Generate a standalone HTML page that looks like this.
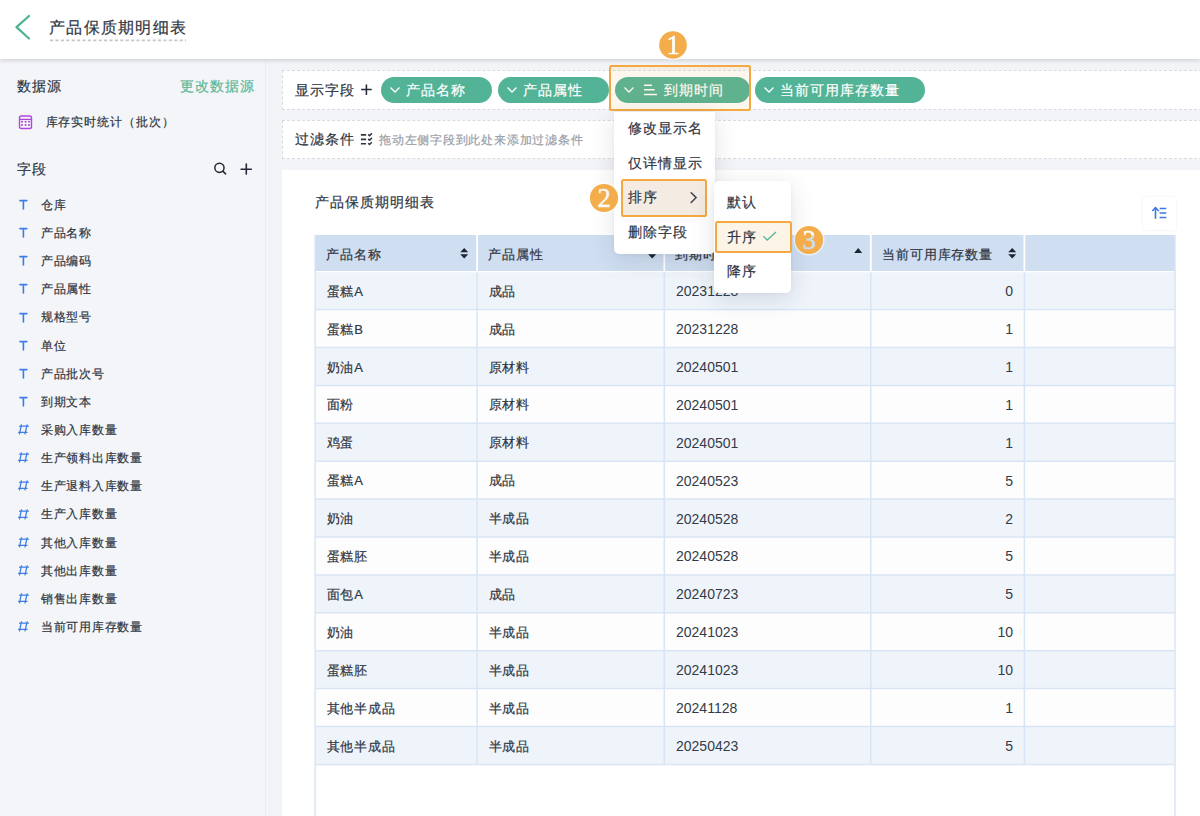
<!DOCTYPE html>
<html><head><meta charset="utf-8">
<style>
*{box-sizing:border-box;margin:0;padding:0}
html,body{width:1200px;height:816px;overflow:hidden}
body{position:relative;background:#f3f4f7;font-family:"Liberation Sans",sans-serif;color:#2f3542;-webkit-text-stroke:0.2px currentColor}
.a{position:absolute;white-space:nowrap}
#hdr{position:absolute;left:0;top:0;width:1200px;height:59px;background:#fff;box-shadow:0 2px 4px rgba(0,0,0,.13);z-index:5}
#side{position:absolute;left:0;top:0;width:266px;height:816px;background:#f4f5f8;border-right:1px solid #ebecef}
.t13{font-size:12px;line-height:13px;letter-spacing:0.74px}
.t14{font-size:13px;line-height:14px;letter-spacing:0.9px}
.t15{font-size:14px;line-height:15px;letter-spacing:1px}
.t14d{font-size:14px;line-height:14px}
.dg{-webkit-text-stroke:0;color:#343b48}
.sc{transform:scale(0.975);transform-origin:0 50%}
.sh{transform:scale(0.985);transform-origin:0 50%}
.box{position:absolute;left:282px;width:940px;background:#fff;border:1px dashed #d8dbdf}
.pill{position:absolute;top:77px;height:26px;border-radius:13px;background:#52b396;color:#fff}
.pill .tx{position:absolute;top:5.6px;font-size:14px;line-height:15px;letter-spacing:1px}
.pill svg{position:absolute}
.card{position:absolute;left:282px;top:170px;width:940px;height:660px;background:#fff}
.menu{position:absolute;background:#fff;border-radius:5px;box-shadow:0 6px 24px rgba(30,40,60,.13),0 1px 4px rgba(30,40,60,.05)}
.badge{position:absolute;width:27.5px;height:27.5px;border-radius:50%;background:#f3ad4b;color:#fff;font-family:"Liberation Serif",serif;font-size:26px;line-height:28px;text-align:center;font-weight:bold}
.hl{position:absolute;border:2px solid #f3a842;border-radius:2.5px}
</style></head><body>
<div id="side">
  <div class="a t15" style="left:17px;top:78.5px">数据源</div>
  <div class="a t15" style="left:179.7px;top:78.5px;color:#5cb899">更改数据源</div>
  <svg class="a" style="left:18px;top:114px" width="16" height="16"><rect x="1.5" y="2" width="12" height="12.5" rx="1.8" fill="none" stroke="#b046d9" stroke-width="1.4"/><path d="M1.5 5.4H13.5" stroke="#b046d9" stroke-width="1.3"/><g fill="#b046d9"><circle cx="4" cy="7.8" r="1.05"/><circle cx="7.6" cy="7.8" r="1.05"/><circle cx="11" cy="7.8" r="1.05"/><circle cx="4" cy="11" r="1.05"/><circle cx="7.6" cy="11" r="1.05"/><circle cx="11" cy="11" r="1.05"/></g></svg>
  <div class="a t13" style="left:45.5px;top:116.3px;letter-spacing:0.98px">库存实时统计（批次）</div>
  <div class="a t15" style="left:17px;top:162px">字段</div>
  <svg class="a" style="left:212px;top:160px" width="16" height="16"><circle cx="7.45" cy="7.8" r="4.6" fill="none" stroke="#232937" stroke-width="1.5"/><path d="M10.8 11.2L13.6 13.8" stroke="#232937" stroke-width="1.6" stroke-linecap="round"/></svg>
  <svg class="a" style="left:238px;top:161px" width="16" height="15"><path d="M8.3 3V13.1M3.1 8.3H13.3" stroke="#232937" stroke-width="1.6" stroke-linecap="round"/></svg>
<svg class="a" style="left:18px;top:198.90px" width="11" height="12"><path d="M1.9 1.6H8.9M5.4 1.6V9.9" stroke="#3f7de6" stroke-width="1.6" stroke-linecap="round" fill="none"/></svg>
<div class="a" style="left:41px;top:198.80px;font-size:12px;line-height:13px;letter-spacing:0.74px">仓库</div>
<svg class="a" style="left:18px;top:227.05px" width="11" height="12"><path d="M1.9 1.6H8.9M5.4 1.6V9.9" stroke="#3f7de6" stroke-width="1.6" stroke-linecap="round" fill="none"/></svg>
<div class="a" style="left:41px;top:226.95px;font-size:12px;line-height:13px;letter-spacing:0.74px">产品名称</div>
<svg class="a" style="left:18px;top:255.20px" width="11" height="12"><path d="M1.9 1.6H8.9M5.4 1.6V9.9" stroke="#3f7de6" stroke-width="1.6" stroke-linecap="round" fill="none"/></svg>
<div class="a" style="left:41px;top:255.10px;font-size:12px;line-height:13px;letter-spacing:0.74px">产品编码</div>
<svg class="a" style="left:18px;top:283.35px" width="11" height="12"><path d="M1.9 1.6H8.9M5.4 1.6V9.9" stroke="#3f7de6" stroke-width="1.6" stroke-linecap="round" fill="none"/></svg>
<div class="a" style="left:41px;top:283.25px;font-size:12px;line-height:13px;letter-spacing:0.74px">产品属性</div>
<svg class="a" style="left:18px;top:311.50px" width="11" height="12"><path d="M1.9 1.6H8.9M5.4 1.6V9.9" stroke="#3f7de6" stroke-width="1.6" stroke-linecap="round" fill="none"/></svg>
<div class="a" style="left:41px;top:311.40px;font-size:12px;line-height:13px;letter-spacing:0.74px">规格型号</div>
<svg class="a" style="left:18px;top:339.65px" width="11" height="12"><path d="M1.9 1.6H8.9M5.4 1.6V9.9" stroke="#3f7de6" stroke-width="1.6" stroke-linecap="round" fill="none"/></svg>
<div class="a" style="left:41px;top:339.55px;font-size:12px;line-height:13px;letter-spacing:0.74px">单位</div>
<svg class="a" style="left:18px;top:367.80px" width="11" height="12"><path d="M1.9 1.6H8.9M5.4 1.6V9.9" stroke="#3f7de6" stroke-width="1.6" stroke-linecap="round" fill="none"/></svg>
<div class="a" style="left:41px;top:367.70px;font-size:12px;line-height:13px;letter-spacing:0.74px">产品批次号</div>
<svg class="a" style="left:18px;top:395.95px" width="11" height="12"><path d="M1.9 1.6H8.9M5.4 1.6V9.9" stroke="#3f7de6" stroke-width="1.6" stroke-linecap="round" fill="none"/></svg>
<div class="a" style="left:41px;top:395.85px;font-size:12px;line-height:13px;letter-spacing:0.74px">到期文本</div>
<svg class="a" style="left:17px;top:424.10px" width="13" height="12"><path d="M4.4 0.9L2.5 9.9M10.1 0.9L8 9.9M2.6 2.2H11.4M1.6 8.3H10.1" stroke="#3f7de6" stroke-width="1.3" stroke-linecap="round" fill="none"/></svg>
<div class="a" style="left:41px;top:424.00px;font-size:12px;line-height:13px;letter-spacing:0.74px">采购入库数量</div>
<svg class="a" style="left:17px;top:452.25px" width="13" height="12"><path d="M4.4 0.9L2.5 9.9M10.1 0.9L8 9.9M2.6 2.2H11.4M1.6 8.3H10.1" stroke="#3f7de6" stroke-width="1.3" stroke-linecap="round" fill="none"/></svg>
<div class="a" style="left:41px;top:452.15px;font-size:12px;line-height:13px;letter-spacing:0.74px">生产领料出库数量</div>
<svg class="a" style="left:17px;top:480.40px" width="13" height="12"><path d="M4.4 0.9L2.5 9.9M10.1 0.9L8 9.9M2.6 2.2H11.4M1.6 8.3H10.1" stroke="#3f7de6" stroke-width="1.3" stroke-linecap="round" fill="none"/></svg>
<div class="a" style="left:41px;top:480.30px;font-size:12px;line-height:13px;letter-spacing:0.74px">生产退料入库数量</div>
<svg class="a" style="left:17px;top:508.55px" width="13" height="12"><path d="M4.4 0.9L2.5 9.9M10.1 0.9L8 9.9M2.6 2.2H11.4M1.6 8.3H10.1" stroke="#3f7de6" stroke-width="1.3" stroke-linecap="round" fill="none"/></svg>
<div class="a" style="left:41px;top:508.45px;font-size:12px;line-height:13px;letter-spacing:0.74px">生产入库数量</div>
<svg class="a" style="left:17px;top:536.70px" width="13" height="12"><path d="M4.4 0.9L2.5 9.9M10.1 0.9L8 9.9M2.6 2.2H11.4M1.6 8.3H10.1" stroke="#3f7de6" stroke-width="1.3" stroke-linecap="round" fill="none"/></svg>
<div class="a" style="left:41px;top:536.60px;font-size:12px;line-height:13px;letter-spacing:0.74px">其他入库数量</div>
<svg class="a" style="left:17px;top:564.85px" width="13" height="12"><path d="M4.4 0.9L2.5 9.9M10.1 0.9L8 9.9M2.6 2.2H11.4M1.6 8.3H10.1" stroke="#3f7de6" stroke-width="1.3" stroke-linecap="round" fill="none"/></svg>
<div class="a" style="left:41px;top:564.75px;font-size:12px;line-height:13px;letter-spacing:0.74px">其他出库数量</div>
<svg class="a" style="left:17px;top:593.00px" width="13" height="12"><path d="M4.4 0.9L2.5 9.9M10.1 0.9L8 9.9M2.6 2.2H11.4M1.6 8.3H10.1" stroke="#3f7de6" stroke-width="1.3" stroke-linecap="round" fill="none"/></svg>
<div class="a" style="left:41px;top:592.90px;font-size:12px;line-height:13px;letter-spacing:0.74px">销售出库数量</div>
<svg class="a" style="left:17px;top:621.15px" width="13" height="12"><path d="M4.4 0.9L2.5 9.9M10.1 0.9L8 9.9M2.6 2.2H11.4M1.6 8.3H10.1" stroke="#3f7de6" stroke-width="1.3" stroke-linecap="round" fill="none"/></svg>
<div class="a" style="left:41px;top:621.05px;font-size:12px;line-height:13px;letter-spacing:0.74px">当前可用库存数量</div>
</div>
<div class="box" style="top:70px;height:40px">
</div>
<div class="a t15" style="left:295px;top:82.8px">显示字段</div>
<svg class="a" style="left:359px;top:82px" width="15" height="15"><path d="M7.4 2.5V12.9M2.1 7.5H12.7" stroke="#232937" stroke-width="1.55"/></svg>
<div class="pill" style="left:381px;width:111px"><svg style="left:8px;top:9px" width="12" height="8"><polyline points="1.5,1.5 6,6 10.5,1.5" fill="none" stroke="#fff" stroke-width="1.3"/></svg><div class="tx" style="left:25px">产品名称</div></div>
<div class="pill" style="left:498px;width:111px"><svg style="left:8px;top:9px" width="12" height="8"><polyline points="1.5,1.5 6,6 10.5,1.5" fill="none" stroke="#fff" stroke-width="1.3"/></svg><div class="tx" style="left:25px">产品属性</div></div>
<div class="pill" style="left:615px;width:135px"><svg style="left:8px;top:9px" width="12" height="8"><polyline points="1.5,1.5 6,6 10.5,1.5" fill="none" stroke="#fff" stroke-width="1.3"/></svg><svg style="left:29px;top:7px" width="15" height="12"><path d="M0 1.3H8M0 5.8H10.6M0 10.5H13" stroke="#fff" stroke-width="1.4"/></svg><div class="tx" style="left:49px">到期时间</div></div>
<div class="pill" style="left:755px;width:170px"><svg style="left:8px;top:9px" width="12" height="8"><polyline points="1.5,1.5 6,6 10.5,1.5" fill="none" stroke="#fff" stroke-width="1.3"/></svg><div class="tx" style="left:25.3px">当前可用库存数量</div></div>

<div class="box" style="top:120px;height:39px"></div>
<div class="a t15" style="left:295px;top:132.3px">过滤条件</div>
<svg class="a" style="left:359px;top:131px" width="16" height="16"><path d="M1.9 3.9H7.1M1.9 8.4H7.1M1.9 12.7H7.1" stroke="#2f3542" stroke-width="1.6"/><path d="M9.2 3.4L10.5 4.7L12.9 2.4M9.2 7.9L10.5 9.2L12.9 6.9M9.2 12.2L10.5 13.5L12.9 11.2" fill="none" stroke="#2f3542" stroke-width="1.5" stroke-linejoin="round"/></svg>
<div class="a t13" style="left:379px;top:133.5px;color:#9a9ea6;letter-spacing:0.78px">拖动左侧字段到此处来添加过滤条件</div>

<div class="card">
</div>
<div class="a t15" style="left:315px;top:195px">产品保质期明细表</div>
<div class="a" style="left:1143px;top:197px;width:33px;height:33px;background:#fff;border-radius:3px;box-shadow:0 0 3px rgba(0,0,0,.08)"></div>
<svg class="a" style="left:1150px;top:205px" width="18" height="16"><path d="M5.5 2.6V13.8" stroke="#3a78e6" stroke-width="1.6"/><path d="M2.3 6L5.5 2.6L8.7 6" fill="none" stroke="#3a78e6" stroke-width="1.6"/><path d="M9.6 3.5H16.3M9.6 8H16.3M9.6 12.6H16.3" stroke="#3a78e6" stroke-width="1.5"/></svg>

<!-- table -->
<div class="a" style="left:315px;top:235px;width:860px;height:36.60000000000002px;background:#cfdff1"></div>
<div class="a" style="left:315px;top:271.60px;width:860px;height:38.00px;background:#eff4fb"></div>
<div class="a t14" style="left:326.5px;top:284.70px">蛋糕A</div>
<div class="a t14" style="left:488.5px;top:284.70px">成品</div>
<div class="a t14d dg" style="left:676px;top:284.10px">20231228</div>
<div class="a t14d dg" style="right:187px;top:284.10px">0</div>
<div class="a" style="left:315px;top:309.60px;width:860px;height:37.90px;background:#fdfdfe"></div>
<div class="a t14" style="left:326.5px;top:322.65px">蛋糕B</div>
<div class="a t14" style="left:488.5px;top:322.65px">成品</div>
<div class="a t14d dg" style="left:676px;top:322.05px">20231228</div>
<div class="a t14d dg" style="right:187px;top:322.05px">1</div>
<div class="a" style="left:315px;top:347.50px;width:860px;height:37.90px;background:#eff4fb"></div>
<div class="a t14" style="left:326.5px;top:360.55px">奶油A</div>
<div class="a t14" style="left:488.5px;top:360.55px">原材料</div>
<div class="a t14d dg" style="left:676px;top:359.95px">20240501</div>
<div class="a t14d dg" style="right:187px;top:359.95px">1</div>
<div class="a" style="left:315px;top:385.40px;width:860px;height:37.90px;background:#fdfdfe"></div>
<div class="a t14" style="left:326.5px;top:398.45px">面粉</div>
<div class="a t14" style="left:488.5px;top:398.45px">原材料</div>
<div class="a t14d dg" style="left:676px;top:397.85px">20240501</div>
<div class="a t14d dg" style="right:187px;top:397.85px">1</div>
<div class="a" style="left:315px;top:423.30px;width:860px;height:37.90px;background:#eff4fb"></div>
<div class="a t14" style="left:326.5px;top:436.35px">鸡蛋</div>
<div class="a t14" style="left:488.5px;top:436.35px">原材料</div>
<div class="a t14d dg" style="left:676px;top:435.75px">20240501</div>
<div class="a t14d dg" style="right:187px;top:435.75px">1</div>
<div class="a" style="left:315px;top:461.20px;width:860px;height:37.90px;background:#fdfdfe"></div>
<div class="a t14" style="left:326.5px;top:474.25px">蛋糕A</div>
<div class="a t14" style="left:488.5px;top:474.25px">成品</div>
<div class="a t14d dg" style="left:676px;top:473.65px">20240523</div>
<div class="a t14d dg" style="right:187px;top:473.65px">5</div>
<div class="a" style="left:315px;top:499.10px;width:860px;height:37.90px;background:#eff4fb"></div>
<div class="a t14" style="left:326.5px;top:512.15px">奶油</div>
<div class="a t14" style="left:488.5px;top:512.15px">半成品</div>
<div class="a t14d dg" style="left:676px;top:511.55px">20240528</div>
<div class="a t14d dg" style="right:187px;top:511.55px">2</div>
<div class="a" style="left:315px;top:537.00px;width:860px;height:37.90px;background:#fdfdfe"></div>
<div class="a t14" style="left:326.5px;top:550.05px">蛋糕胚</div>
<div class="a t14" style="left:488.5px;top:550.05px">半成品</div>
<div class="a t14d dg" style="left:676px;top:549.45px">20240528</div>
<div class="a t14d dg" style="right:187px;top:549.45px">5</div>
<div class="a" style="left:315px;top:574.90px;width:860px;height:37.90px;background:#eff4fb"></div>
<div class="a t14" style="left:326.5px;top:587.95px">面包A</div>
<div class="a t14" style="left:488.5px;top:587.95px">成品</div>
<div class="a t14d dg" style="left:676px;top:587.35px">20240723</div>
<div class="a t14d dg" style="right:187px;top:587.35px">5</div>
<div class="a" style="left:315px;top:612.80px;width:860px;height:37.90px;background:#fdfdfe"></div>
<div class="a t14" style="left:326.5px;top:625.85px">奶油</div>
<div class="a t14" style="left:488.5px;top:625.85px">半成品</div>
<div class="a t14d dg" style="left:676px;top:625.25px">20241023</div>
<div class="a t14d dg" style="right:187px;top:625.25px">10</div>
<div class="a" style="left:315px;top:650.70px;width:860px;height:37.90px;background:#eff4fb"></div>
<div class="a t14" style="left:326.5px;top:663.75px">蛋糕胚</div>
<div class="a t14" style="left:488.5px;top:663.75px">半成品</div>
<div class="a t14d dg" style="left:676px;top:663.15px">20241023</div>
<div class="a t14d dg" style="right:187px;top:663.15px">10</div>
<div class="a" style="left:315px;top:688.60px;width:860px;height:37.90px;background:#fdfdfe"></div>
<div class="a t14" style="left:326.5px;top:701.65px">其他半成品</div>
<div class="a t14" style="left:488.5px;top:701.65px">半成品</div>
<div class="a t14d dg" style="left:676px;top:701.05px">20241128</div>
<div class="a t14d dg" style="right:187px;top:701.05px">1</div>
<div class="a" style="left:315px;top:726.50px;width:860px;height:37.90px;background:#eff4fb"></div>
<div class="a t14" style="left:326.5px;top:739.55px">其他半成品</div>
<div class="a t14" style="left:488.5px;top:739.55px">半成品</div>
<div class="a t14d dg" style="left:676px;top:738.95px">20250423</div>
<div class="a t14d dg" style="right:187px;top:738.95px">5</div>
<svg class="a" style="left:0;top:0" width="1200" height="816"><line x1="315" y1="309.60" x2="1175" y2="309.60" stroke="#d9e5f4" stroke-width="1.5"/><line x1="315" y1="347.50" x2="1175" y2="347.50" stroke="#d9e5f4" stroke-width="1.5"/><line x1="315" y1="385.40" x2="1175" y2="385.40" stroke="#d9e5f4" stroke-width="1.5"/><line x1="315" y1="423.30" x2="1175" y2="423.30" stroke="#d9e5f4" stroke-width="1.5"/><line x1="315" y1="461.20" x2="1175" y2="461.20" stroke="#d9e5f4" stroke-width="1.5"/><line x1="315" y1="499.10" x2="1175" y2="499.10" stroke="#d9e5f4" stroke-width="1.5"/><line x1="315" y1="537.00" x2="1175" y2="537.00" stroke="#d9e5f4" stroke-width="1.5"/><line x1="315" y1="574.90" x2="1175" y2="574.90" stroke="#d9e5f4" stroke-width="1.5"/><line x1="315" y1="612.80" x2="1175" y2="612.80" stroke="#d9e5f4" stroke-width="1.5"/><line x1="315" y1="650.70" x2="1175" y2="650.70" stroke="#d9e5f4" stroke-width="1.5"/><line x1="315" y1="688.60" x2="1175" y2="688.60" stroke="#d9e5f4" stroke-width="1.5"/><line x1="315" y1="726.50" x2="1175" y2="726.50" stroke="#d9e5f4" stroke-width="1.5"/><line x1="315" y1="764.40" x2="1175" y2="764.40" stroke="#d9e5f4" stroke-width="1.5"/><line x1="477.1" y1="271.6" x2="477.1" y2="764.40" stroke="#d9e5f4" stroke-width="1.5"/><line x1="477.1" y1="235" x2="477.1" y2="271.6" stroke="#ffffff" stroke-width="1.8"/><line x1="664.3" y1="271.6" x2="664.3" y2="764.40" stroke="#d9e5f4" stroke-width="1.5"/><line x1="664.3" y1="235" x2="664.3" y2="271.6" stroke="#ffffff" stroke-width="1.8"/><line x1="870.8" y1="271.6" x2="870.8" y2="764.40" stroke="#d9e5f4" stroke-width="1.5"/><line x1="870.8" y1="235" x2="870.8" y2="271.6" stroke="#ffffff" stroke-width="1.8"/><line x1="1024.4" y1="271.6" x2="1024.4" y2="764.40" stroke="#d9e5f4" stroke-width="1.5"/><line x1="1024.4" y1="235" x2="1024.4" y2="271.6" stroke="#ffffff" stroke-width="1.8"/><line x1="315.1" y1="235" x2="315.1" y2="816" stroke="#d9e5f4" stroke-width="1.5"/><line x1="1175" y1="235" x2="1175" y2="816" stroke="#d9e5f4" stroke-width="1.5"/><line x1="316" y1="271.6" x2="1174" y2="271.6" stroke="#ffffff" stroke-width="1.2"/></svg>
<div class="a t14"  style="left:326px;top:247.5px">产品名称</div>
<div class="a t14"  style="left:488px;top:247.5px">产品属性</div>
<div class="a t14"  style="left:675px;top:247.5px">到期时间</div>
<div class="a t14"  style="left:882px;top:247.5px">当前可用库存数量</div>
<svg class="a" style="left:459px;top:247px" width="11" height="13"><path d="M1.2 5.3L5.2 1L9.2 5.3ZM1.2 7.3L5.2 11.6L9.2 7.3Z" fill="#1d2433"/></svg>
<svg class="a" style="left:647px;top:247px" width="11" height="13"><path d="M1.2 5.3L5.2 1L9.2 5.3ZM1.2 7.3L5.2 11.6L9.2 7.3Z" fill="#1d2433"/></svg>
<svg class="a" style="left:853px;top:246px" width="11" height="8"><path d="M1.2 7L5.2 2L9.2 7Z" fill="#1d2433"/></svg>
<svg class="a" style="left:1007px;top:247px" width="11" height="13"><path d="M1.2 5.3L5.2 1L9.2 5.3ZM1.2 7.3L5.2 11.6L9.2 7.3Z" fill="#1d2433"/></svg>

<div id="hdr">
  <svg class="a" style="left:0;top:0" width="40" height="59"><polyline points="29,16 16.5,27.2 29,38.5" fill="none" stroke="#4fb394" stroke-width="2.3" stroke-linecap="round" stroke-linejoin="round"/></svg>
  <div class="a" style="left:49px;top:19px;font-size:16px;line-height:17px;letter-spacing:1.25px;color:#2f3542">产品保质期明细表</div>
  <svg class="a" style="left:0;top:0" width="200" height="50"><line x1="50" y1="40.3" x2="186" y2="40.3" stroke="#c5c8cd" stroke-width="1.7" stroke-dasharray="3.2 2.2"/></svg>
</div>

<div style="position:absolute;left:0;top:0;width:1200px;height:816px;z-index:9">
<!-- highlight 1 -->
<div class="hl" style="left:609.4px;top:65.4px;width:141.8px;height:46px;background:rgba(245,170,70,.09)"></div>
<svg class="a" style="left:653.2px;top:25.1px" width="40" height="40"><defs><mask id="mk1" maskUnits="userSpaceOnUse" x="0" y="0" width="40" height="40"><rect width="40" height="40" fill="#fff"/><text x="20" y="29" text-anchor="middle" font-family="Liberation Serif" font-size="26.5" fill="#000" stroke="#000" stroke-width="0.7">1</text></mask></defs><circle cx="20" cy="20" r="14.65" fill="none" stroke="rgba(255,255,255,.6)" stroke-width="1.4"/><circle cx="20" cy="20" r="13.85" fill="#f3ad4b" mask="url(#mk1)"/></svg>

<!-- menu -->
<div class="menu" style="left:614px;top:112px;width:101px;height:142px;border-radius:0 0 5px 5px">
</div>
<div class="a t15" style="left:627.5px;top:121px">修改显示名</div>
<div class="a t15" style="left:627.5px;top:156px">仅详情显示</div>
<div class="hl" style="left:621px;top:179.3px;width:86px;height:37.5px;background:#f4ece3"></div>
<div class="a t15" style="left:627.5px;top:190px">排序</div>
<svg class="a" style="left:688px;top:190px" width="11" height="15"><polyline points="2.7,2.2 8.1,7.6 2.7,13" fill="none" stroke="#474c57" stroke-width="1.6"/></svg>
<div class="a t15" style="left:627.5px;top:225px">删除字段</div>
<svg class="a" style="left:583.9px;top:178.2px" width="40" height="40"><defs><mask id="mk2" maskUnits="userSpaceOnUse" x="0" y="0" width="40" height="40"><rect width="40" height="40" fill="#fff"/><text x="20" y="29" text-anchor="middle" font-family="Liberation Serif" font-size="26.5" fill="#000" stroke="#000" stroke-width="0.7">2</text></mask></defs><circle cx="20" cy="20" r="14.90" fill="none" stroke="rgba(255,255,255,.6)" stroke-width="1.4"/><circle cx="20" cy="20" r="14.1" fill="#f3ad4b" mask="url(#mk2)"/></svg>

<div class="menu" style="left:714px;top:181px;width:77px;height:112px">
</div>
<div class="hl" style="left:715.3px;top:221.2px;width:76.7px;height:32px;background:#fdf4e8"></div>
<div class="a t15" style="left:727px;top:195px">默认</div>
<div class="a t15" style="left:727px;top:230px">升序</div>
<svg class="a" style="left:761px;top:230px" width="17" height="13"><polyline points="2.3,6.3 6.2,10 15,2" fill="none" stroke="#5bb899" stroke-width="1.4"/></svg>
<div class="a t15" style="left:727px;top:264px">降序</div>
<svg class="a" style="left:789px;top:220.1px" width="40" height="40"><defs><mask id="mk3" maskUnits="userSpaceOnUse" x="0" y="0" width="40" height="40"><rect width="40" height="40" fill="#fff"/><text x="20" y="29" text-anchor="middle" font-family="Liberation Serif" font-size="26.5" fill="#000" stroke="#000" stroke-width="0.7">3</text></mask></defs><circle cx="20" cy="20" r="14.80" fill="none" stroke="rgba(255,255,255,.6)" stroke-width="1.4"/><circle cx="20" cy="20" r="14.0" fill="#f3ad4b" mask="url(#mk3)"/></svg>
</div>
</body></html>
